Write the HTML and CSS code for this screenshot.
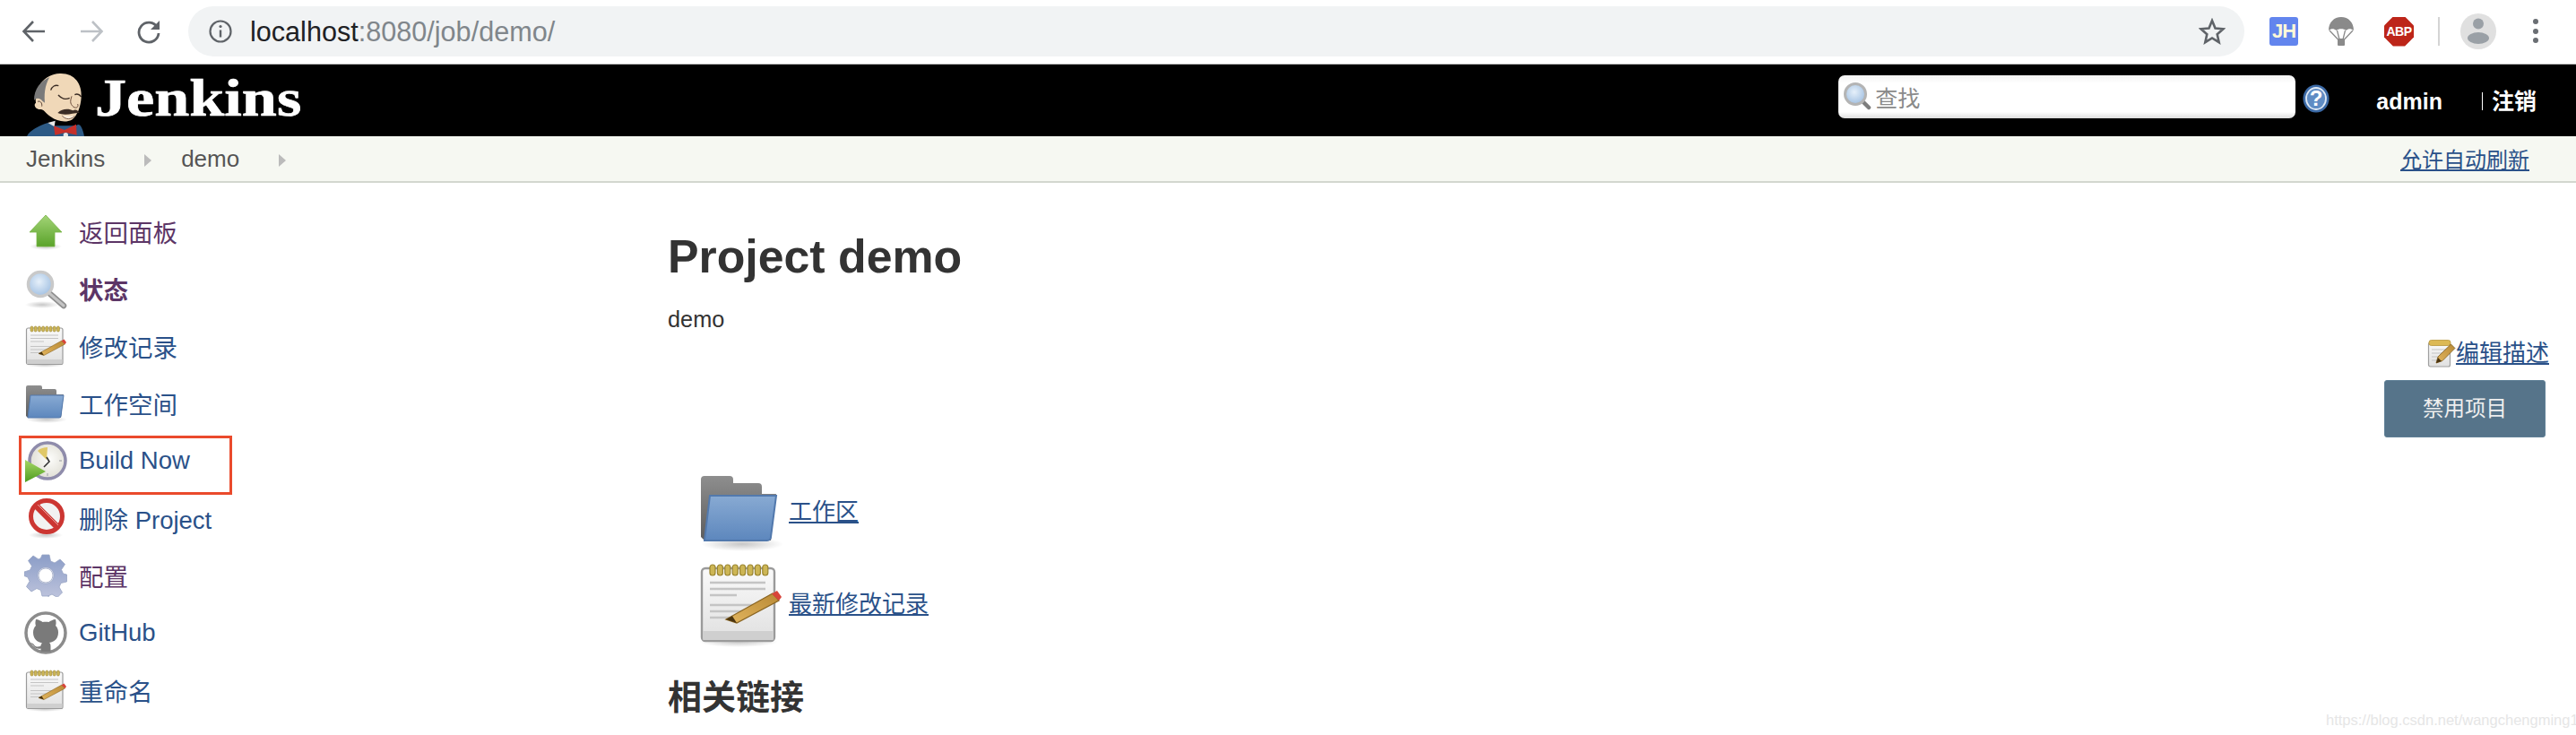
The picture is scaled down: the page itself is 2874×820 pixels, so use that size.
FILE: index.html
```html
<!DOCTYPE html>
<html lang="zh">
<head>
<meta charset="utf-8">
<title>demo [Jenkins]</title>
<link rel="stylesheet" href="styles.css">
</head>
<body>
<svg class="defs" aria-hidden="true">
  <defs>
    <linearGradient id="gArrow" x1="0" y1="0" x2="0" y2="1"><stop offset="0" stop-color="#a3d477"/><stop offset="1" stop-color="#5aa32a"/></linearGradient>
    <radialGradient id="gGlass" cx=".45" cy=".4" r=".65"><stop offset="0" stop-color="#e6f0fa"/><stop offset="1" stop-color="#9dbde0"/></radialGradient>
    <linearGradient id="gBack" x1="0" y1="0" x2="0" y2="1"><stop offset="0" stop-color="#8e8e8e"/><stop offset="1" stop-color="#5c5c5c"/></linearGradient>
    <linearGradient id="gFolder" x1="0" y1="0" x2="0" y2="1"><stop offset="0" stop-color="#88aad3"/><stop offset="1" stop-color="#5d87bd"/></linearGradient>
    <linearGradient id="gPaper" x1="0" y1="0" x2="0" y2="1"><stop offset="0" stop-color="#fafafa"/><stop offset="1" stop-color="#e0e0e0"/></linearGradient>
    <linearGradient id="gPencil" x1="0" y1="1" x2="1" y2="0"><stop offset="0" stop-color="#e3b660"/><stop offset="1" stop-color="#b98a35"/></linearGradient>
    <linearGradient id="gGear" x1="0" y1="0" x2="0" y2="1"><stop offset="0" stop-color="#8b9dc7"/><stop offset="1" stop-color="#bdc3dc"/></linearGradient>
    <linearGradient id="gPlay" x1="0" y1="0" x2="0" y2="1"><stop offset="0" stop-color="#a6d765"/><stop offset="1" stop-color="#4c9c1e"/></linearGradient>
    <radialGradient id="gFace" cx=".55" cy=".45" r=".6"><stop offset="0" stop-color="#fdfdfb"/><stop offset="1" stop-color="#dedcd2"/></radialGradient>
    <radialGradient id="gShadow"><stop offset="0" stop-color="#000" stop-opacity=".22"/><stop offset="1" stop-color="#000" stop-opacity="0"/></radialGradient>

    <symbol id="i-up" viewBox="0 0 48 48">
      <ellipse cx="24" cy="41" rx="18" ry="4" fill="url(#gShadow)"/>
      <path d="M24 6 42 25H34V41H14V25H6Z" fill="url(#gArrow)" stroke="#7ab548" stroke-width=".8"/>
    </symbol>
    <symbol id="i-search" viewBox="0 0 48 48">
      <ellipse cx="20" cy="42" rx="19" ry="4" fill="url(#gShadow)"/>
      <path d="M29 30 44 43" stroke="#8f8f8f" stroke-width="6.500" stroke-linecap="round"/>
      <path d="M29 30 44 43" stroke="#c4c4c4" stroke-width="3" stroke-linecap="round"/>
      <circle cx="18" cy="19" r="13.500" fill="url(#gGlass)" stroke="#c9c9c9" stroke-width="3.500"/>
    </symbol>
    <symbol id="i-find" viewBox="0 0 32 32">
      <path d="M22 21 29 28" stroke="#7d7d7d" stroke-width="4.500" stroke-linecap="round"/>
      <circle cx="14" cy="13" r="11.500" fill="url(#gGlass)" stroke="#b4b4b4" stroke-width="3"/>
    </symbol>
    <symbol id="i-folder" viewBox="0 0 48 48">
      <ellipse cx="25" cy="42" rx="23" ry="4" fill="url(#gShadow)"/>
      <path d="M2 6a2 2 0 0 1 2-2H18a2 2 0 0 1 2 2V8H34a2 2 0 0 1 2 2V14H44L41 40H4L2 38Z" fill="url(#gBack)"/>
      <path d="M7 15H44L41 38a2 2 0 0 1-2 2H4Z" fill="url(#gFolder)" stroke="#5279ad" stroke-width="1"/>
    </symbol>
    <symbol id="i-note" viewBox="0 0 48 48">
      <ellipse cx="23" cy="45" rx="22" ry="3" fill="url(#gShadow)"/>
      <rect x="2.500" y="4" width="40.500" height="40.500" rx="2" fill="url(#gPaper)" stroke="#9a9a9a" stroke-width="1.200"/>
      <rect x="3.100" y="39" width="39.300" height="5" fill="#cfcfcf"/>
      <g fill="#cdb655" stroke="#9a8530" stroke-width=".6">
        <rect x="7" y="2" width="3" height="6" rx="1.500"/><rect x="11.200" y="2" width="3" height="6" rx="1.500"/><rect x="15.400" y="2" width="3" height="6" rx="1.500"/><rect x="19.600" y="2" width="3" height="6" rx="1.500"/><rect x="23.800" y="2" width="3" height="6" rx="1.500"/><rect x="28" y="2" width="3" height="6" rx="1.500"/><rect x="32.200" y="2" width="3" height="6" rx="1.500"/><rect x="36.400" y="2" width="3" height="6" rx="1.500"/>
      </g>
      <path d="M7 12H38M7 15.500H38M7 19H22M7 24.500H36M7 28H32M7 31.500H18" stroke="#c4c4c4" stroke-width="1.200"/>
      <path d="M16 32.500 42 18 45.500 22 22 34.500Z" fill="url(#gPencil)" stroke="#8a6522" stroke-width=".6"/>
      <path d="M16 32.500 19.500 30.600 22 34.500Z" fill="#4a3410"/>
      <path d="M41.500 18.300 44.500 16.500 47 20 45.500 22Z" fill="#d8443a"/>
    </symbol>
    <symbol id="i-note-small" viewBox="0 0 32 32">
      <rect x="1.500" y="4" width="24" height="27" rx="2" fill="url(#gPaper)" stroke="#a0a0a0" stroke-width="1.200"/>
      <rect x="2" y="1.500" width="24" height="6" rx="2.500" fill="#dcb955" stroke="#b8953a" stroke-width=".8"/>
      <path d="M5 12H22M5 16H18M5 20H14M5 24H12" stroke="#c4c4c4" stroke-width="1.200"/>
      <path d="M10 27 12 20 26.500 6 31 10.500 17 24.500Z" fill="url(#gPencil)" stroke="#7e5a1c" stroke-width=".8"/>
      <path d="M10 27 12 21 16 25Z" fill="#4a3410"/>
    </symbol>
    <symbol id="i-build" viewBox="0 0 48 48">
      <circle cx="26" cy="24" r="20" fill="url(#gFace)" stroke="#8f8cab" stroke-width="3.500"/>
      <path d="M25 23 15 13C18 10 22 9 26 9Z" fill="#e0c867"/>
      <path d="M25 20 28 25 22 31" fill="none" stroke="#333" stroke-width="1.600"/>
      <path d="M39 24H42M26 38V41" stroke="#b5b5b5" stroke-width="1.500"/>
      <path d="M1 23 24 36 1 48Z" fill="url(#gPlay)"/>
    </symbol>
    <symbol id="i-delete" viewBox="0 0 48 48">
      <ellipse cx="24" cy="43" rx="19" ry="4" fill="url(#gShadow)"/>
      <circle cx="25" cy="22" r="17.500" fill="#f2f2f2" stroke="#cc3632" stroke-width="5"/>
      <path d="M13 10 37 34" stroke="#cc3632" stroke-width="7"/>
      <path d="M15 9 38 32" stroke="#e8a09c" stroke-width="1"/>
    </symbol>
    <symbol id="i-gear" viewBox="0 0 48 48">
      <path fill="url(#gGear)" stroke="#98a5c4" stroke-width=".8" fill-rule="evenodd" d="M20 1h8l1.500 7 4.500 2 6-4 5.500 5.500-4 6 2 4.500 4 1v8l-6.500 1.500-2 4.500 3.500 6-5.500 5.500-6-3.500-4.500 2L28 47h-8l-1.500-6.500-4.500-2-6 3.500L2.500 36.500l3.500-6-2-4.500L0 24.500V20l6.500-2 2-4.500-4-6L10 2l6 4 2.500-1.500ZM24 15a9 9 0 1 0 .01 0Z"/>
      <circle cx="24" cy="24" r="8" fill="#fff" stroke="#b0b8d0" stroke-width="1"/>
    </symbol>
    <symbol id="i-github" viewBox="0 0 48 48">
      <circle cx="24" cy="24" r="22" fill="#fff" stroke="#8c8c8c" stroke-width="3.500"/>
      <path fill="#7a7a7a" d="M13 9c3 0 6 2 7.500 3 2.300-.5 4.700-.5 7 0C29 11 32 9 35 9c.8 3 .7 5.500 0 7 2 2 3 4.500 3 7.500 0 7-4 10.500-10 11.500 1 .8 1.500 2 1.500 4v6h-11v-3.500c-3 .6-6 0-8-3-1-1.500-2.500-2.500-4-3 2-.5 3.500.5 5 2.500 1.500 1.700 4 1.800 6.800 1 .1-1.300.7-2.500 1.700-3.500C14 34 10 30.500 10 23.500c0-3 1-5.500 3-7.500-.7-1.500-.8-4 0-7Z"/>
    </symbol>
  </defs>
</svg>

<div class="toolbar">
  <div class="nav">
    <svg class="nav-ico" viewBox="0 0 28 28"><path d="M26 14H3M13 3 2.500 14 13 25" fill="none" stroke="#5f6368" stroke-width="2.600"/></svg>
    <svg class="nav-ico" viewBox="0 0 28 28"><path d="M2 14H25M15 3 25.500 14 15 25" fill="none" stroke="#bdc1c6" stroke-width="2.600"/></svg>
    <svg class="nav-ico" viewBox="0 0 28 28"><path d="M23.500 9.500A11 11 0 1 0 25 16" fill="none" stroke="#5f6368" stroke-width="2.800"/><path d="M26 2V12H16Z" fill="#5f6368"/></svg>
  </div>
  <div class="omnibox">
    <svg class="info" viewBox="0 0 26 26"><circle cx="13" cy="13" r="11.500" fill="none" stroke="#5f6368" stroke-width="2.200"/><path d="M13 11.500V19.500" stroke="#5f6368" stroke-width="2.400"/><circle cx="13" cy="7.500" r="1.600" fill="#5f6368"/></svg>
    <span class="url"><span class="host">localhost</span>:8080/job/demo/</span>
    <svg class="star" viewBox="0 0 30 30"><path d="M15 3 18.500 11.500 27.500 12.300 20.700 18.300 22.700 27.200 15 22.500 7.300 27.200 9.300 18.300 2.500 12.300 11.500 11.500Z" fill="none" stroke="#5f6368" stroke-width="2.600" stroke-linejoin="miter"/></svg>
  </div>
  <div class="ext">
    <span class="ext-jh">JH</span>
    <svg class="ext-chute" viewBox="0 0 30 32"><path d="M1 15C1 6 7 0 15 0s14 6 14 15C26 12.500 23 12.500 20.500 15 18 12.500 12 12.500 9.500 15 7 12.500 4 12.500 1 15Z" fill="#8a8a8a"/><path d="M2 15 11.500 25M28 15 18.500 25M10.500 15 13 25M19.500 15 17 25" stroke="#8a8a8a" stroke-width="1.300"/><rect x="11" y="24" width="8" height="8" rx="1" fill="#8a8a8a"/></svg>
    <span class="ext-abp">ABP</span>
    <span class="ext-sep"></span>
    <svg class="avatar" viewBox="0 0 40 40"><circle cx="20" cy="20" r="20" fill="#e0e0e0"/><circle cx="20" cy="11.500" r="6" fill="#9aa0a6"/><ellipse cx="20" cy="27.500" rx="12" ry="6.500" fill="#9aa0a6"/></svg>
    <svg class="menu" viewBox="0 0 8 30"><circle cx="4" cy="4" r="3" fill="#6a6e73"/><circle cx="4" cy="15" r="3" fill="#6a6e73"/><circle cx="4" cy="25" r="3" fill="#6a6e73"/></svg>
  </div>
</div>

<header class="topbar">
  <div class="brand">
    <svg class="butler" viewBox="0 0 270 240">
      <path d="M30 240C40 220 70 205 100 195L125 205H195C205 195 215 205 222 240Z" fill="#2d5a85"/>
      <path d="M60 128C55 80 85 32 140 30 190 28 215 65 212 110 210 140 200 170 180 185 160 195 130 190 110 175 95 165 88 152 78 150 60 152 50 135 60 128Z" fill="#f0d8b8"/>
      <path d="M54 120C54 82 75 56 106 42 96 60 86 85 90 128L82 122C72 110 60 112 54 120Z" fill="#7a7a7a"/>
      <path d="M66 124C74 120 82 128 80 140" fill="none" stroke="#5d4637" stroke-width="3"/>
      <path d="M110 86C114 73 125 67 136 71" fill="none" stroke="#3a2c24" stroke-width="4"/>
      <path d="M135 102C145 114 160 118 173 112" fill="none" stroke="#3a2c24" stroke-width="4.500"/>
      <path d="M190 101C198 97 207 101 212 108" fill="none" stroke="#3a2c24" stroke-width="4"/>
      <path d="M180 106C176 120 172 130 186 142 196 148 204 142 200 132" fill="none" stroke="#6b4c3c" stroke-width="3"/>
      <path d="M133 162C148 146 172 148 184 154 194 148 200 153 206 162 190 160 160 174 133 162Z" fill="#3a2c24"/>
      <path d="M148 172C162 186 178 184 190 172" fill="#fbeedd" stroke="#6b4c3c" stroke-width="2.500"/>
      <path d="M100 195 125 188 122 208Z" fill="#e8e8e8"/>
      <path d="M120 205 156 219 195 200 197 236 160 227 124 236Z" fill="#c6302a"/>
      <circle cx="160" cy="236" r="8" fill="#e8e8e8"/>
    </svg>
    <span class="wordmark">Jenkins</span>
  </div>
  <div class="tools">
    <div class="searchbox">
      <svg class="search-ico"><use href="#i-find"/></svg>
      <span class="placeholder">查找</span>
    </div>
    <svg class="help" viewBox="0 0 30 32"><ellipse cx="15" cy="16" rx="14.500" ry="15.500" fill="#3c6aa6"/><ellipse cx="15" cy="16" rx="11" ry="12" fill="#5f8cc4" stroke="#dfe9f5" stroke-width="1.800"/><text class="help-q" x="15" y="24" text-anchor="middle">?</text></svg>
    <a class="user">admin</a>
    <span class="logout"><span class="bar"></span><a>注销</a></span>
  </div>
</header>

<nav class="crumbs">
  <a class="crumb">Jenkins</a><span class="arrow"></span>
  <a class="crumb">demo</a><span class="arrow"></span>
  <a class="refresh">允许自动刷新</a>
</nav>

<div class="layout">
  <aside class="side">
    <a class="task visited"><svg class="task-ico"><use href="#i-up"/></svg>返回面板</a>
    <a class="task visited strong"><svg class="task-ico"><use href="#i-search"/></svg>状态</a>
    <a class="task"><svg class="task-ico"><use href="#i-note"/></svg>修改记录</a>
    <a class="task"><svg class="task-ico"><use href="#i-folder"/></svg>工作空间</a>
    <a class="task marked"><svg class="task-ico"><use href="#i-build"/></svg>Build Now</a>
    <a class="task"><svg class="task-ico"><use href="#i-delete"/></svg>删除 Project</a>
    <a class="task visited"><svg class="task-ico"><use href="#i-gear"/></svg>配置</a>
    <a class="task"><svg class="task-ico"><use href="#i-github"/></svg>GitHub</a>
    <a class="task"><svg class="task-ico"><use href="#i-note"/></svg>重命名</a>
  </aside>
  <main class="content">
    <h1>Project demo</h1>
    <p class="desc">demo</p>
    <div class="actions">
      <a class="edit"><svg class="edit-ico"><use href="#i-note-small"/></svg><span class="ul">编辑描述</span></a>
      <button class="disable">禁用项目</button>
    </div>
    <div class="links">
      <div class="link-row"><svg class="link-ico"><use href="#i-folder"/></svg><a class="ul">工作区</a></div>
      <div class="link-row"><svg class="link-ico"><use href="#i-note"/></svg><a class="ul">最新修改记录</a></div>
    </div>
    <h2>相关链接</h2>
  </main>
</div>
<div class="watermark">https://blog.csdn.net/wangchengming1</div>
</body>
</html>
```
FILE: styles.css
```css
*, *::before, *::after { box-sizing: border-box; }
html, body { margin: 0; height: 820px; overflow: hidden; background: #fff; }
body { font-family: "Liberation Sans", "Noto Sans CJK SC", sans-serif; color: #333; position: relative; }
.defs { display: block; width: 0; height: 0; }

.toolbar { height: 72px; display: flex; align-items: center; border-bottom: 1px solid #bdbdbd; padding-bottom: 3px; padding-top: 2px; }
.nav { display: flex; gap: 36px; padding-left: 24px; width: 210px; }
.nav-ico { width: 28px; height: 28px; display: block; }
.omnibox { width: 2294px; height: 56px; border-radius: 28px; background: #f1f3f4; display: flex; align-items: center; padding-left: 23px; padding-right: 21px; }
.info { width: 26px; height: 26px; margin-right: 20px; }
.url { font-size: 30.600px; color: #80868b; flex: 1; }
.host { color: #202124; }
.star { width: 30px; height: 30px; }
.ext { display: flex; align-items: center; padding-left: 28px; }
.ext-jh { width: 32px; height: 32px; background: #6285ee; border-radius: 3px; color: #fff8d8; font: bold 22px/32px "Liberation Sans", sans-serif; letter-spacing: -1px; text-align: center; }
.ext-chute { width: 30px; height: 32px; margin-left: 33px; }
.ext-abp { width: 33px; height: 33px; margin-left: 33px; background: #bd2519; color: #fff; font: bold 14px/33px "Liberation Sans", sans-serif; letter-spacing: -.5px; text-align: center; clip-path: polygon(30% 0, 70% 0, 100% 30%, 100% 70%, 70% 100%, 30% 100%, 0 70%, 0 30%); }
.ext-sep { width: 2px; height: 32px; background: #d4d4d4; margin-left: 27px; }
.avatar { width: 40px; height: 40px; margin-left: 23px; }
.menu { width: 8px; height: 30px; margin-left: 40px; }

.topbar { height: 80px; background: #000; display: flex; justify-content: space-between; color: #fff; overflow: hidden; }
.brand { display: flex; align-items: flex-start; padding-left: 20px; }
.butler { width: 90px; height: 80px; display: block; flex: none; }
.wordmark { display: block; font: bold 60px/70px "Liberation Serif", serif; margin: 2px 0 0 -4px; color: #fff; transform: scaleX(1.17); transform-origin: left center; -webkit-text-stroke: .7px #fff; }
.tools { display: flex; align-items: flex-start; padding-top: 12px; padding-right: 44px; }
.searchbox { width: 510px; height: 48px; background: linear-gradient(#f2f2f2, #fff 18%, #fff 85%, #dedede); border-radius: 7px; display: flex; align-items: center; padding-left: 5px; }
.search-ico { width: 32px; height: 32px; }
.placeholder { font-size: 25px; color: #8a8a8a; margin-left: 4px; }
.help { width: 30px; height: 32px; margin: 10px 0 0 8px; }
.help-q { font: bold 24px "Liberation Sans", sans-serif; fill: #fff; }
.user { font-size: 25px; font-weight: bold; margin: 14px 0 0 52px; line-height: 30px; }
.logout { display: flex; align-items: center; margin: 14px 0 0 44px; line-height: 30px; font-size: 25px; font-weight: bold; }
.bar { width: 1px; height: 20px; background: #fff; margin-right: 10px; }

.crumbs { height: 52px; background: #f6f8f2; border-bottom: 2px solid #d3d7cf; display: flex; align-items: center; padding-left: 29px; padding-right: 52px; font-size: 26px; color: #555; }
.arrow { width: 0; height: 0; border-left: 8px solid #bbb; border-top: 7px solid transparent; border-bottom: 7px solid transparent; margin: 4px 33px 0 44px; }
.crumb { color: #555; }
.refresh { margin-left: auto; margin-bottom: 2px; color: #2a5189; text-decoration: underline; font-size: 24px; }

.layout { display: flex; }
.side { width: 745px; padding-top: 23px; flex: none; }
.task { display: flex; align-items: center; height: 64px; padding-left: 27px; padding-bottom: 2px; font-size: 27.500px; color: #2a5189; position: relative; }
.task.visited { color: #5c3566; }
.task.strong { font-weight: bold; }
.task-ico { width: 48px; height: 48px; margin-right: 13px; flex: none; }
.marked::after { content: ""; position: absolute; left: 21px; top: 3px; width: 238px; height: 66px; border: 3px solid #ea4a2c; }

.content { flex: 1; padding-right: 30px; display: flex; flex-direction: column; }
h1 { font-size: 51.800px; line-height: 60px; margin: 52px 0 0; color: #333; font-weight: bold; }
.desc { font-size: 25.300px; line-height: 30px; margin: 25px 0 0; color: #333; }
.actions { display: flex; flex-direction: column; align-items: flex-end; margin-top: 7px; }
.edit { display: flex; align-items: center; height: 32px; font-size: 26px; color: #2a5189; }
.edit .ul { margin-bottom: 5px; }
.ul { text-decoration: underline; color: #2a5189; }
.edit-ico { width: 32px; height: 32px; flex: none; }
.disable { width: 180px; height: 64px; margin: 14px 4px 0 0; background: #56748a; border: 1px solid #5f8096; border-radius: 3px; color: #eee; font: 23.500px "Liberation Sans", "Noto Sans CJK SC", sans-serif; padding: 0 0 4px; }
.links { display: flex; flex-direction: column; gap: 7px; margin-top: 35px; padding-left: 33px; }
.link-row { display: flex; align-items: center; height: 96px; font-size: 26px; }
.link-row .ul { margin-bottom: 5px; }
.link-ico { width: 96px; height: 96px; margin-right: 6px; flex: none; }
h2 { font-size: 38px; line-height: 44px; margin: 34px 0 0; color: #333; font-weight: bold; }

.watermark { position: absolute; left: 2595px; top: 793px; font-size: 16.500px; line-height: 20px; color: #e6e6e6; white-space: nowrap; }
```
